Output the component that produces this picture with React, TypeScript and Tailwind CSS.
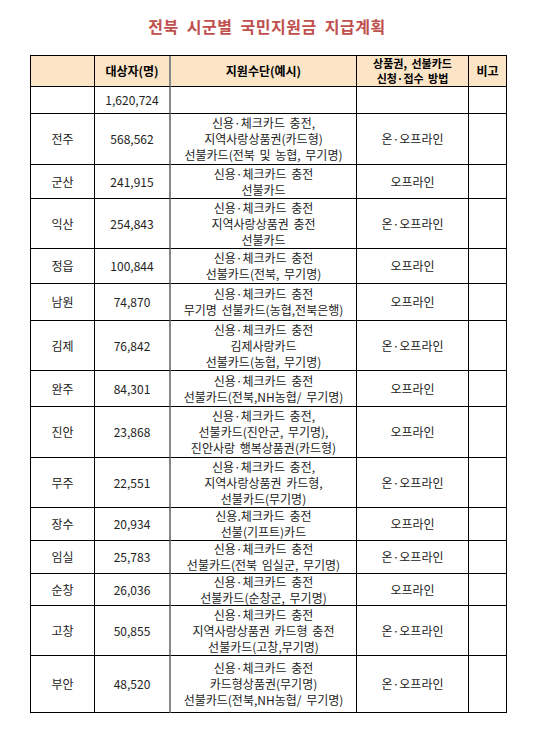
import React from "react";

type Row = { name: string; count: string; means: string[]; method: string; h: string };

const rows: Row[] = [
  { name: "전주", count: "568,562", means: ["신용·체크카드 충전,", "지역사랑상품권(카드형)", "선불카드(전북 및 농협, 무기명)"], method: "온·오프라인", h: "h-[51px]" },
  { name: "군산", count: "241,915", means: ["신용·체크카드 충전", "선불카드"], method: "오프라인", h: "h-[34px]" },
  { name: "익산", count: "254,843", means: ["신용·체크카드 충전", "지역사랑상품권 충전", "선불카드"], method: "온·오프라인", h: "h-[50px]" },
  { name: "정읍", count: "100,844", means: ["신용·체크카드 충전", "선불카드(전북, 무기명)"], method: "오프라인", h: "h-[35px]" },
  { name: "남원", count: "74,870", means: ["신용·체크카드 충전", "무기명 선불카드(농협,전북은행)"], method: "오프라인", h: "h-[37px]" },
  { name: "김제", count: "76,842", means: ["신용·체크카드 충전", "김제사랑카드", "선불카드(농협, 무기명)"], method: "온·오프라인", h: "h-[50px]" },
  { name: "완주", count: "84,301", means: ["신용·체크카드 충전", "선불카드(전북,NH농협/ 무기명)"], method: "오프라인", h: "h-[36px]" },
  { name: "진안", count: "23,868", means: ["신용·체크카드 충전,", "선불카드(진안군, 무기명),", "진안사랑 행복상품권(카드형)"], method: "오프라인", h: "h-[51px]" },
  { name: "무주", count: "22,551", means: ["신용·체크카드 충전,", "지역사랑상품권 카드형,", "선불카드(무기명)"], method: "온·오프라인", h: "h-[50px]" },
  { name: "장수", count: "20,934", means: ["신용.체크카드 충전", "선불(기프트)카드"], method: "오프라인", h: "h-[33px]" },
  { name: "임실", count: "25,783", means: ["신용·체크카드 충전", "선불카드(전북 임실군, 무기명)"], method: "온·오프라인", h: "h-[33px]" },
  { name: "순창", count: "26,036", means: ["신용·체크카드 충전", "선불카드(순창군, 무기명)"], method: "오프라인", h: "h-[32px]" },
  { name: "고창", count: "50,855", means: ["신용·체크카드 충전", "지역사랑상품권 카드형 충전", "선불카드(고창,무기명)"], method: "온·오프라인", h: "h-[50px]" },
  { name: "부안", count: "48,520", means: ["신용·체크카드 충전", "카드형상품권(무기명)", "선불카드(전북,NH농협/ 무기명)"], method: "온·오프라인", h: "h-[57px]" },
];

const cell = "flex items-center justify-center text-center border-b border-r border-black";

export default function App() {
  return (
    <div
      className="w-[534px] h-[740px] bg-white text-[#222] overflow-hidden"
      style={{ fontFamily: '"Noto Sans CJK KR", "Noto Sans", sans-serif' }}
    >
      <h1 className="pt-[15px] text-center text-[16px] leading-[22px] font-bold text-[#c0504d] tracking-[0.5px] [word-spacing:4px]">
        전북 시군별 국민지원금 지급계획
      </h1>
      <div className="mt-[18px] ml-[30px] w-[477px] border-t border-l border-black text-[12px] leading-[16px]">
        {/* header */}
        <div className="flex h-[31px] bg-[#fce4c6] font-bold text-black">
          <div className={`${cell} w-[64px]`}></div>
          <div className={`${cell} w-[76px] !border-r-2 !border-r-[#888]`}>대상자(명)</div>
          <div className={`${cell} w-[186px]`}>지원수단(예시)</div>
          <div className={`${cell} w-[112px] flex-col text-[11px] leading-[15px] [word-spacing:2px]`}>
            <span className="whitespace-nowrap">상품권, 선불카드</span>
            <span className="whitespace-nowrap">신청·접수 방법</span>
          </div>
          <div className={`${cell} w-[38px]`}>비고</div>
        </div>
        {/* total */}
        <div className="flex h-[27px]">
          <div className={`${cell} w-[64px]`}></div>
          <div className={`${cell} w-[76px] !border-r-2 !border-r-[#888]`}>1,620,724</div>
          <div className={`${cell} w-[186px]`}></div>
          <div className={`${cell} w-[112px]`}></div>
          <div className={`${cell} w-[38px]`}></div>
        </div>
        {rows.map((r) => (
          <div key={r.name} className={`flex ${r.h}`}>
            <div className={`${cell} w-[64px]`}>{r.name}</div>
            <div className={`${cell} w-[76px] !border-r-2 !border-r-[#888]`}>{r.count}</div>
            <div className={`${cell} w-[186px] flex-col [word-spacing:2px]`}>
              {r.means.map((m, i) => (
                <span key={i} className="whitespace-nowrap">{m}</span>
              ))}
            </div>
            <div className={`${cell} w-[112px]`}>{r.method}</div>
            <div className={`${cell} w-[38px]`}></div>
          </div>
        ))}
      </div>
    </div>
  );
}
